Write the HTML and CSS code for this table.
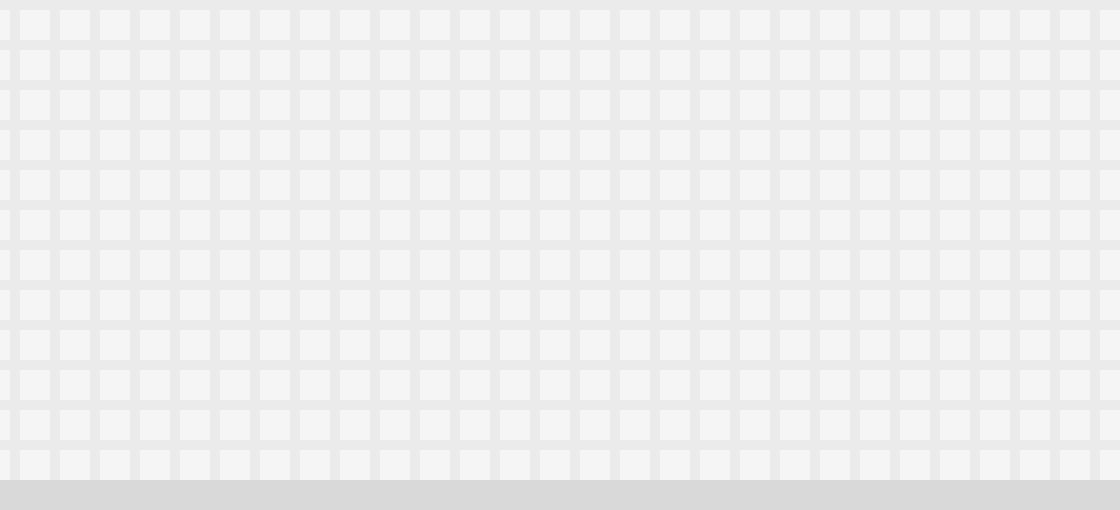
FILE: index.html
```html
<!DOCTYPE html>
<html lang="en">
<head>
<meta charset="utf-8">
<title>Grid</title>
<link rel="stylesheet" href="styles.css">
</head>
<body>
<div class="page">
  <main class="canvas"></main>
  <footer class="statusbar"></footer>
</div>
</body>
</html>
```

FILE: styles.css
```css
html, body {
  margin: 0;
  padding: 0;
  font-family: "Liberation Sans", Arial, sans-serif;
}
.page {
  width: 1120px;
  height: 510px;
  display: flex;
  flex-direction: column;
  overflow: hidden;
}
.canvas {
  height: 480px;
  background-color: #f5f5f5;
  background-image:
    linear-gradient(to right, #ebebeb 10px, transparent 10px),
    linear-gradient(to bottom, #ebebeb 10px, transparent 10px);
  background-size: 40px 40px, 40px 40px;
  background-position: 10px 0, 0 0;
}
.statusbar {
  height: 30px;
  background: #d9d9d9;
}
```
